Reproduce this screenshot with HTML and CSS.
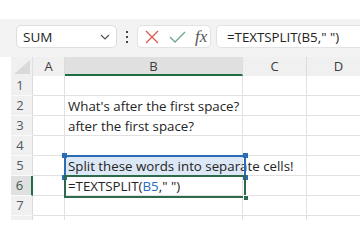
FILE: index.html
```html
<!DOCTYPE html>
<html>
<head>
<meta charset="utf-8">
<title>TEXTSPLIT</title>
<link rel="stylesheet" href="styles.css">
</head>
<body>
<div class="ribbon"></div>

<div class="fbar">
	<div class="namebox">
		<span>SUM</span>
		<svg class="chev" width="10" height="6" viewBox="0 0 10 6"><path d="M1 1 L5 5 L9 1" fill="none" stroke="#555" stroke-width="1.2"/></svg>
	</div>
	<div class="dots"><i></i><i></i><i></i></div>
	<div class="fxbox">
		<svg class="ico" width="14" height="14" viewBox="0 0 14 14"><path d="M1 1 L13 13 M13 1 L1 13" fill="none" stroke="#d8574f" stroke-width="1.3"/></svg>
		<svg class="ico" width="17" height="12" viewBox="0 0 17 12"><path d="M1 6 L6 11 L16 1" fill="none" stroke="#6aa987" stroke-width="1.3"/></svg>
		<span class="fx">fx</span>
	</div>
	<div class="formula">=TEXTSPLIT(B5," ")</div>
</div>

<div class="sheet">
	<div class="grid">
		<div class="corner"><svg width="16" height="14" viewBox="0 0 16 14"><path d="M16 0 L16 14 L0 14 Z" fill="#d9d9d9"/></svg></div>
		<div class="colhead">A</div>
		<div class="colhead sel">B</div>
		<div class="colhead">C</div>
		<div class="colhead">D</div>

		<div class="rowhead">1</div><div class="cell"></div><div class="cell"></div><div class="cell"></div><div class="cell"></div>
		<div class="rowhead">2</div><div class="cell"></div><div class="cell">What's after the first space?</div><div class="cell"></div><div class="cell"></div>
		<div class="rowhead">3</div><div class="cell"></div><div class="cell">after the first space?</div><div class="cell"></div><div class="cell"></div>
		<div class="rowhead">4</div><div class="cell"></div><div class="cell"></div><div class="cell"></div><div class="cell"></div>
		<div class="rowhead">5</div><div class="cell"></div><div class="cell ref">Split these words into separate cells!</div><div class="cell"></div><div class="cell"></div>
		<div class="rowhead sel">6</div><div class="cell"></div><div class="cell">=TEXTSPLIT(<span class="blue">B5</span>," ")</div><div class="cell"></div><div class="cell"></div>
		<div class="rowhead">7</div><div class="cell"></div><div class="cell"></div><div class="cell"></div><div class="cell"></div>
		<div class="rowhead"></div><div class="cell"></div><div class="cell"></div><div class="cell"></div><div class="cell"></div>
	</div>

	<!-- range box for B5 and the active cell B6 -->
	<div class="refbox">
		<i class="h tl"></i><i class="h tr"></i><i class="h bl"></i><i class="h br"></i>
	</div>
	<div class="active"><i class="fill"></i></div>
</div>
</body>
</html>
```

FILE: styles.css
```css
body {
	margin: 0;
	width: 360px;
	height: 240px;
	overflow: hidden;
	background: #fff;
	font-family: "Open Sans", "Noto Sans", sans-serif;
	color: #242424;
}

.ribbon {
	height: 19px;
}

/* formula bar */
.fbar {
	display: flex;
	align-items: center;
	height: 38px;
	padding: 0 0 0 16px;
	background: #f3f3f3;
	box-sizing: border-box;
	padding-bottom: 3px;
}
.namebox {
	display: flex;
	align-items: center;
	justify-content: space-between;
	width: 101px;
	height: 23px;
	box-sizing: border-box;
	padding: 0 6px 0 6px;
	background: #fff;
	border: 1px solid #dedede;
	border-radius: 5px;
	font-size: 13.5px;
}
.dots {
	display: flex;
	flex-direction: column;
	gap: 3px;
	margin: 0 9px 0 9px;
}
.dots i {
	display: block;
	width: 2px;
	height: 2px;
	background: #444;
}
.fxbox {
	display: flex;
	align-items: center;
	width: 74px;
	height: 23px;
	box-sizing: border-box;
	padding-left: 7px;
	gap: 10px;
	background: #fff;
	border: 1px solid #e2e2e2;
	border-radius: 5px;
}
.fx {
	font-family: "Liberation Serif", serif;
	font-style: italic;
	font-size: 17px;
	color: #555;
	margin-left: -1px;
}
.formula {
	margin-left: 5px;
	flex: 1;
	height: 23px;
	line-height: 22px;
	box-sizing: border-box;
	padding-left: 10px;
	background: #fff;
	border: 1px solid #e2e2e2;
	border-right: none;
	border-radius: 5px 0 0 5px;
	font-size: 13.3px;
	white-space: nowrap;
}

/* sheet */
.sheet {
	position: relative;
	margin-left: 11px;
	height: 163px;
	overflow: hidden;
}
.grid {
	display: grid;
	grid-template-columns: 22px 32px 178px 64px 64px;
	grid-template-rows: 19px repeat(8, 20px);
	width: 360px;
}
.corner {
	background: #f0f0f0;
	border-right: 1px solid #e0e0e0;
	display: flex;
	align-items: flex-end;
	justify-content: flex-end;
	padding: 0 2px 2px 0;
}
.colhead {
	background: #f0f0f0;
	border-right: 1px solid #dcdcdc;
	text-align: center;
	font-size: 13px;
	line-height: 19px;
	color: #3c3c3c;
}
.colhead.sel {
	background: #e0e0e0;
	border-bottom: 2px solid #1e6e45;
	line-height: 18px;
}
.rowhead {
	background: #f0f0f0;
	border-bottom: 1px solid #fafafa;
	border-right: 1px solid #dcdcdc;
	text-align: center;
	padding-right: 3px;
	font-size: 13px;
	line-height: 19px;
	color: #505a66;
}
.rowhead.sel {
	background: #e0e0e0;
	border-right: 2px solid #1e6e45;
	color: #3b5a48;
}
.cell {
	border-right: 1px solid #e1e1e1;
	border-bottom: 1px solid #e1e1e1;
	padding-left: 3px;
	font-size: 13.3px;
	line-height: 20px;
	white-space: nowrap;
}
.cell.ref {
	background: #dce8f5;
	overflow: visible;
	position: relative;
	z-index: 1;
}
.blue {
	color: #2a6cc0;
}

.refbox {
	position: absolute;
	left: 53px;
	top: 98px;
	width: 178px;
	height: 20px;
	border: 2px solid #2a6db4;
	border-bottom: none;
	z-index: 2;
}
.h {
	position: absolute;
	width: 5px;
	height: 5px;
	background: #2a6db4;
}
.tl { left: -4px; top: -4px; }
.tr { right: -4px; top: -4px; }
.bl { left: -4px; bottom: -3px; }
.br { right: -4px; bottom: -3px; }

.active {
	position: absolute;
	left: 53px;
	top: 118px;
	width: 178px;
	height: 19px;
	border: 2px solid #2d6a4c;
	z-index: 3;
}
.fill {
	position: absolute;
	right: -5px;
	bottom: -5px;
	width: 6px;
	height: 6px;
	background: #2d6a4c;
	border: 1px solid #fff;
	box-sizing: border-box;
}
```
